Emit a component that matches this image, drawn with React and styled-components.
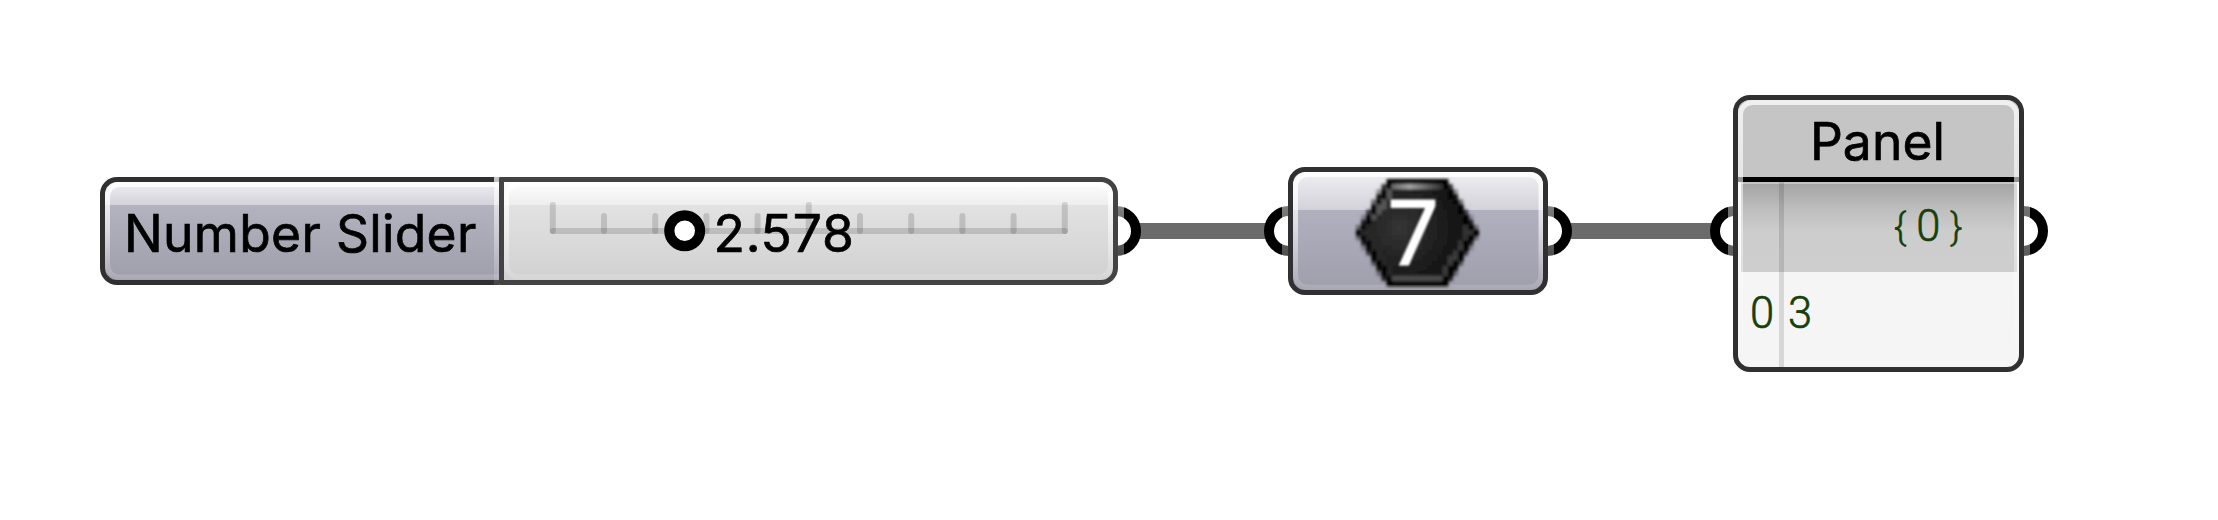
import React from "react";
import styled, { createGlobalStyle } from "styled-components";

const GlobalStyle = createGlobalStyle`
  body { margin: 0; background: #fff; overflow: hidden; }
`;

const Canvas = styled.main`
  position: relative;
  width: 2218px;
  height: 520px;
  background: #fff;
  font-family: Inter, "Liberation Sans", sans-serif;
  color: #000;
`;

const Wire = styled.div`
  position: absolute;
  left: ${(p) => p.$from}px;
  width: ${(p) => p.$to - p.$from}px;
  top: 223px;
  height: 15.6px;
  background: #6b6b6b;
`;

const PortRing = styled.div`
  position: absolute;
  box-sizing: border-box;
  left: ${(p) => p.$cx - 25.2}px;
  top: 205.6px;
  width: 50.4px;
  height: 50.4px;
  border: 10px solid #000;
  border-radius: 50%;
  background: #fff;
`;

const Node = styled.section`
  position: absolute;
  box-sizing: border-box;
  display: flex;
  left: ${(p) => p.$x}px;
  top: ${(p) => p.$y}px;
  width: ${(p) => p.$w}px;
  height: ${(p) => p.$h}px;
  border-radius: 17px;
`;

/* Translucent rim that softens the ports where they meet the capsule. */
const Halo = styled(Node)`
  left: ${(p) => p.$x - 5.5}px;
  width: ${(p) => p.$w + 11}px;
  background: linear-gradient(rgba(255, 255, 255, 0.64), rgba(255, 255, 255, 0.16));
  border-radius: 19px;
`;

const InnerRim = styled.svg`
  position: absolute;
  inset: 0;
  width: 100%;
  height: 100%;
  overflow: visible;
  pointer-events: none;
`;

const Face = styled.div`
  position: relative;
  box-sizing: border-box;
  display: flex;
  align-items: center;
  overflow: hidden;
  border: 5px solid ${(p) => p.$edge || "#303030"};
  border-radius: 17px;
  background: #fff;
`;

const LabelFace = styled(Face)`
  width: 399px;
  border-right: 0;
  border-radius: 17px 0 0 17px;
  padding: 4px 0 0 19px;
  background: linear-gradient(#f0eff3 0, #d3d2db 23px, #b3b3c0 23px, #9f9eab 100%);
`;

const Seam = styled.i`
  position: absolute;
  left: 394px;
  top: 0;
  width: 5px;
  height: 100%;
  background: linear-gradient(rgba(255, 255, 255, 0.72), rgba(255, 255, 255, 0.1));
`;

const TrackFace = styled(Face)`
  flex: 1;
  border-radius: 1px 17px 17px 1px;
  background: linear-gradient(#fefefe 0, #eeeeee 23px, #e2e2e2 23px, #d1d1d1 100%);
`;

const ComponentFace = styled(Face)`
  width: 100%;
  justify-content: center;
  background: linear-gradient(#f0eff2 0, #d3d2da 37.7px, #b1b0bf 37.7px, #9f9eab 100%);
`;

const Title = styled.span`
  position: relative;
  font-size: 51.5px;
  font-weight: 400;
  line-height: 62px;
  letter-spacing: ${(p) => p.$track || 0}px;
  white-space: nowrap;
  -webkit-text-stroke: 0.7px #000;
`;

const Track = styled.svg`
  position: absolute;
  left: 0;
  top: 0;
  width: 614px;
  height: 97px;
  line, path { stroke: #000; stroke-opacity: 0.14; stroke-width: 6; stroke-linecap: round; }
`;

const Value = styled(Title)`
  margin: 5px 0 0 209.5px;
`;

const Glyph = styled.svg`
  display: block;
  width: 123px;
  height: 108px;
  margin: 5px 0 0 0;
  overflow: visible;
`;

const PanelFace = styled(Face)`
  width: 100%;
  flex-direction: column;
  align-items: stretch;
  background: #f5f5f5;
`;

const PanelHead = styled.header`
  display: flex;
  justify-content: center;
  align-items: center;
  height: 77.3px;
  padding: 5px 2px 0 0;
  box-sizing: border-box;
  background: #c5c5c5;
  flex: none;
`;

const PanelRule = styled.div`
  height: 5px;
  flex: none;
  background: #000;
`;

const PathRow = styled.div`
  box-sizing: border-box;
  display: flex;
  justify-content: flex-end;
  gap: 10px;
  height: 89.5px;
  flex: none;
  padding: 20px 54px 0 0;
  margin: 0 2.5px;
  background: linear-gradient(#c4c4c4 2px, #a4a4a4 2px, #bebebe 27px, #cdcdcd 50px, #cecece);
`;

const DataRow = styled.div`
  display: flex;
  padding-top: 17px;
`;

const DataText = styled.span`
  position: relative;
  font: 300 43.5px/50px Roboto, "Noto Sans", sans-serif;
  color: #173f0c;
  white-space: pre;
  -webkit-text-stroke: 0.6px #173f0c;
`;

const Brace = styled(DataText)`
  font-size: 37px;
`;

const IndexCell = styled.div`
  box-sizing: border-box;
  width: 50px;
  padding-left: 12px;
`;

const ColumnRule = styled.i`
  position: absolute;
  left: 41px;
  top: 82.3px;
  bottom: 0;
  width: 5px;
  background: rgba(0, 0, 0, 0.12);
`;

function InnerHighlight({ id, w, h, top = 0.9, mid = 0.55, end = 0.1, open }) {
  const d = open
    ? `M${w} 2.5H14.5a12 12 0 0 0-12 12V${h - 14.5}a12 12 0 0 0 12 12H${w}`
    : `M14.5 2.5H${w - 14.5}a12 12 0 0 1 12 12V${h - 14.5}a12 12 0 0 1-12 12H14.5a12 12 0 0 1-12-12V14.5a12 12 0 0 1 12-12Z`;
  return (
    <InnerRim>
      <defs>
        <linearGradient id={id} gradientUnits="userSpaceOnUse" x1="0" y1="0" x2="0" y2={h}>
          <stop offset="0" stopColor="#fff" stopOpacity={top} />
          <stop offset="0.5" stopColor="#fff" stopOpacity={mid} />
          <stop offset="1" stopColor="#fff" stopOpacity={end} />
        </linearGradient>
      </defs>
      <path d={d} fill="none" stroke={`url(#${id})`} strokeWidth="5" />
    </InnerRim>
  );
}

const TICKS = Array.from({ length: 11 }, (_, i) => i);
const COLS = 24;
const ROWS = 21;
const CELL = 5.1;

/* Low-resolution bevelled hexagon: one entry per visible cell. */
function hexCells() {
  const cells = [];
  for (let r = 0; r < ROWS; r++) {
    const d = Math.abs(r - 10);
    const start = 0.58 * d;
    const vert = 10 - d;
    for (let c = 0; c < COLS; c++) {
      const side = Math.min(c, COLS - 1 - c);
      const run = side - start;
      if (run < -0.75) continue;
      const depth = Math.min(run * 0.8, vert);
      let shade;
      let alpha = 1;
      if (run < 0) alpha = 1 + run;
      if (depth < 0.8) shade = 3;
      else if (depth < 1.75) {
        if (vert <= 1 && r < 10) shade = Math.max(35, 165 - Math.abs(c - 10) * 18);
        else if (vert <= 1) shade = 76;
        else if (c < 12) shade = r < 8 ? 88 : 40;
        else shade = r > 12 ? 58 : r > 8 ? 48 : 22;
      } else {
        const dist = Math.hypot(c - 8, r - 9);
        shade = Math.max(19, 52 - dist * 2.7);
      }
      cells.push({ c, r, alpha, shade: Math.round(shade) });
    }
  }
  return cells;
}

function IntegerIcon() {
  return (
    <Glyph viewBox="0 0 123 108">
      <defs>
        <filter id="cellSoft" x="-5%" y="-5%" width="110%" height="110%">
          <feGaussianBlur stdDeviation="1.4" />
        </filter>
        <filter id="digitSoft" x="-10%" y="-10%" width="120%" height="120%">
          <feGaussianBlur stdDeviation="1.1" />
        </filter>
      </defs>
      <g filter="url(#cellSoft)">
        {hexCells().map(({ c, r, alpha, shade }) => (
          <rect
            key={`${c}-${r}`}
            x={c * CELL}
            y={r * CELL}
            width={alpha < 1 ? CELL : CELL + 0.6}
            height={alpha < 1 ? CELL : CELL + 0.6}
            fill={`rgb(${shade},${shade},${shade})`}
            fillOpacity={alpha}
          />
        ))}
      </g>
      <text
        transform="translate(31.5 86)"
        fontFamily="'Open Sans', 'Noto Sans', sans-serif"
        fontSize="90"
        fontWeight="400"
        fill="#fff"
        stroke="#fff"
        strokeWidth="1.8"
        filter="url(#digitSoft)"
      >
        7
      </text>
    </Glyph>
  );
}

export default function App() {
  return (
    <>
      <GlobalStyle />
      <Canvas>
        <Wire $from={1130} $to={1280} />
        <Wire $from={1560} $to={1725} />
        {[1116, 1289.5, 1546.5, 1735, 2022.5].map((cx) => (
          <PortRing key={cx} $cx={cx} />
        ))}
        <Halo $x={100} $y={177} $w={1018} $h={107.5} />
        <Halo $x={1287.5} $y={167} $w={260.5} $h={127.7} />
        <Halo $x={1733} $y={95} $w={291} $h={276.7} />

        <Node $x={100} $y={177} $w={1018} $h={107.5}>
          <LabelFace>
            <InnerHighlight id="hlLabel" w={394} h={97.5} open />
            <Title $track={0.3}>Number Slider</Title>
          </LabelFace>
          <Seam />
          <TrackFace $edge="#434343">
            <InnerHighlight id="hlTrack" w={609} h={97.5} mid={0.5} />
            <Track viewBox="0 0 614 97">
              <line x1="48.8" y1="48.9" x2="560.8" y2="48.9" />
              {TICKS.map((i) => (
                <path key={i} d={`M${48.8 + i * 51.2} ${i % 5 === 0 ? 23 : 34}V48.9`} />
              ))}
              <circle cx="180.7" cy="48.7" r="15.4" fill="#fff" stroke="#000" strokeWidth="10.2" />
            </Track>
            <Value $track={0.8}>2.578</Value>
          </TrackFace>
        </Node>

        <Node $x={1287.5} $y={167} $w={260.5} $h={127.7}>
          <ComponentFace>
            <IntegerIcon />
            <InnerHighlight id="hlComp" w={250.5} h={117.7} />
          </ComponentFace>
        </Node>

        <Node $x={1733} $y={95} $w={291} $h={276.7}>
          <PanelFace>
            <PanelHead>
              <Title $track={0.1}>Panel</Title>
            </PanelHead>
            <PanelRule />
            <PathRow>
              <Brace>{"{"}</Brace>
              <DataText>0</DataText>
              <Brace>{"}"}</Brace>
            </PathRow>
            <DataRow>
              <IndexCell>
                <DataText>0</DataText>
              </IndexCell>
              <DataText>3</DataText>
            </DataRow>
            <ColumnRule />
            <InnerHighlight id="hlPanel" w={281} h={266.7} top={0.75} mid={0.45} end={0} />
          </PanelFace>
        </Node>
      </Canvas>
    </>
  );
}
